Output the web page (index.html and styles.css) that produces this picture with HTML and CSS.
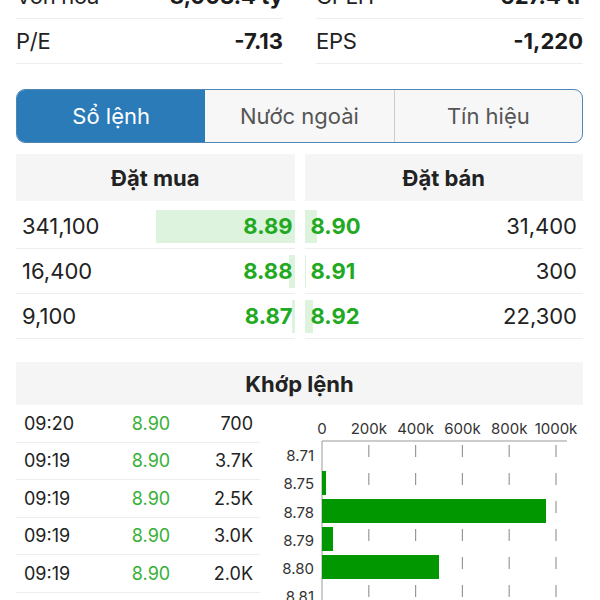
FILE: index.html
```html
<!DOCTYPE html>
<html>
<head>
  <meta charset="utf-8">
  <title>Sổ lệnh</title>
  <link rel="stylesheet" href="styles.css">
</head>
<body>
<div class="page">

  <div class="stats">
    <div class="stat"><span>Vốn hoá</span><b>8,003.4 tỷ</b></div>
    <div class="stat"><span>CPLH</span><b>527.4 tr</b></div>
    <div class="stat"><span>P/E</span><b>-7.13</b></div>
    <div class="stat"><span>EPS</span><b>-1,220</b></div>
  </div>

  <div class="tabs">
    <div class="tab active">Sổ lệnh</div>
    <div class="tab">Nước ngoài</div>
    <div class="tab">Tín hiệu</div>
  </div>

  <div class="book">
    <div class="side buy">
      <div class="head">Đặt mua</div>
      <div class="row"><span class="vol">341,100</span><span class="bar" style="width:139px"></span><b class="price">8.89</b></div>
      <div class="row"><span class="vol">16,400</span><span class="bar" style="width:6px"></span><b class="price">8.88</b></div>
      <div class="row"><span class="vol">9,100</span><span class="bar" style="width:3px"></span><b class="price">8.87</b></div>
    </div>
    <div class="side sell">
      <div class="head">Đặt bán</div>
      <div class="row"><span class="bar" style="width:12px"></span><b class="price">8.90</b><span class="vol">31,400</span></div>
      <div class="row"><span class="bar" style="width:1px"></span><b class="price">8.91</b><span class="vol">300</span></div>
      <div class="row"><span class="bar" style="width:8px"></span><b class="price">8.92</b><span class="vol">22,300</span></div>
    </div>
  </div>

  <div class="match">
    <div class="head">Khớp lệnh</div>
    <div class="match-body">
      <div class="trades">
        <div class="trade"><span class="time">09:20</span><span class="tprice">8.90</span><span class="tvol">700</span></div>
        <div class="trade"><span class="time">09:19</span><span class="tprice">8.90</span><span class="tvol">3.7K</span></div>
        <div class="trade"><span class="time">09:19</span><span class="tprice">8.90</span><span class="tvol">2.5K</span></div>
        <div class="trade"><span class="time">09:19</span><span class="tprice">8.90</span><span class="tvol">3.0K</span></div>
        <div class="trade"><span class="time">09:19</span><span class="tprice">8.90</span><span class="tvol">2.0K</span></div>
      </div>

      <svg class="chart" width="323" height="200" viewBox="0 0 323 200">
        <g class="xlab">
          <text x="62" y="29">0</text>
          <text x="108.8" y="29">200k</text>
          <text x="155.6" y="29">400k</text>
          <text x="202.4" y="29">600k</text>
          <text x="249.2" y="29">800k</text>
          <text x="296" y="29">1000k</text>
        </g>
        <line class="axis" x1="62" y1="36" x2="307" y2="36"/>
        <line class="axis" x1="62" y1="36" x2="62" y2="200"/>
        <g class="grid">
          <line x1="108.8" x2="108.8" y1="36" y2="200"/>
          <line x1="155.6" x2="155.6" y1="36" y2="200"/>
          <line x1="202.4" x2="202.4" y1="36" y2="200"/>
          <line x1="249.2" x2="249.2" y1="36" y2="200"/>
          <line x1="296" x2="296" y1="36" y2="200"/>
        </g>
        <g class="ylab">
          <text x="54" y="56">8.71</text>
          <text x="54" y="84">8.75</text>
          <text x="54" y="113">8.78</text>
          <text x="54" y="141">8.79</text>
          <text x="54" y="169">8.80</text>
          <text x="54" y="197">8.81</text>
        </g>
        <g class="bars">
          <rect x="62" y="66" width="4" height="24"/>
          <rect x="62" y="94" width="224" height="24"/>
          <rect x="62" y="122" width="11" height="24"/>
          <rect x="62" y="150" width="117" height="24"/>
        </g>
      </svg>
    </div>
  </div>

</div>
</body>
</html>
```

FILE: styles.css
```css
html, body { margin: 0; background: #fff; }
body {
  font-family: Inter, "Noto Sans", sans-serif;
  color: #222;
  overflow: hidden;
}
.page {
  margin-top: -26px;
  padding: 0 17px 0 16px;
}

/* stats */
.stats {
  display: grid;
  grid-template-columns: 1fr 1fr;
  column-gap: 33px;
}
.stat {
  display: flex;
  justify-content: space-between;
  align-items: center;
  height: 44px;
  border-bottom: 1px solid #eeeeee;
  font-size: 22px;
}
.stat span { letter-spacing: -0.3px; }
.stat b { font-weight: 700; color: #1c1c1c; }

/* tabs */
.tabs {
  margin-top: 25px;
  display: grid;
  grid-template-columns: repeat(3, 1fr);
  height: 54px;
  border: 1.5px solid #4f86b3;
  border-radius: 9px;
  overflow: hidden;
  background: #f7f7f8;
  box-sizing: border-box;
}
.tab {
  display: flex;
  align-items: center;
  justify-content: center;
  font-size: 22px;
  color: #555;
}
.tab + .tab { border-left: 1.5px solid #c9ccd0; }
.tab.active {
  background: #2a7bb8;
  color: #fff;
}
.tab.active + .tab { border-left: none; }

/* order book */
.book {
  margin-top: 11px;
  display: grid;
  grid-template-columns: 1fr 1fr;
  column-gap: 10px;
}
.head {
  height: 47px;
  display: flex;
  align-items: center;
  justify-content: center;
  background: #f5f5f6;
  font-weight: 700;
  font-size: 22px;
}
.side .head { margin-bottom: 3px; }
.row {
  position: relative;
  display: flex;
  justify-content: space-between;
  align-items: center;
  height: 44px;
  border-bottom: 1px solid #eeeeee;
  font-size: 22px;
  padding: 0 2px 0 6px;
}
.sell .row { padding: 0 6px 0 6px; }
.bar {
  position: absolute;
  top: 6px;
  bottom: 5px;
  background: #ddf3de;
}
.buy .bar { right: 0; }
.sell .bar { left: 0; }
.price { position: relative; color: #22a922; font-weight: 700; }
.vol { position: relative; }

/* matched orders */
.match { margin-top: 23px; }
.match .head { height: 43px; }
.match-body { display: flex; }
.trades { width: 244px; flex: none; }
.trade {
  display: grid;
  grid-template-columns: 96px 62px 1fr;
  align-items: center;
  height: 36.5px;
  border-bottom: 1px solid #eeeeee;
  font-size: 18px;
  padding: 0 7px 0 8px;
}
.tprice { color: #36b036; text-align: center; }
.tvol { text-align: right; }

.chart { flex: none; display: block; }
.chart text { font-family: Inter, "Noto Sans", sans-serif; font-size: 15px; fill: #333; }
.xlab text { text-anchor: middle; }
.ylab text { text-anchor: end; }
.axis { stroke: #999; stroke-width: 1; }
.grid line { stroke: #999; stroke-width: 1.2; stroke-dasharray: 12 16; stroke-dashoffset: -4; }
.bars rect { fill: #009700; }
```
